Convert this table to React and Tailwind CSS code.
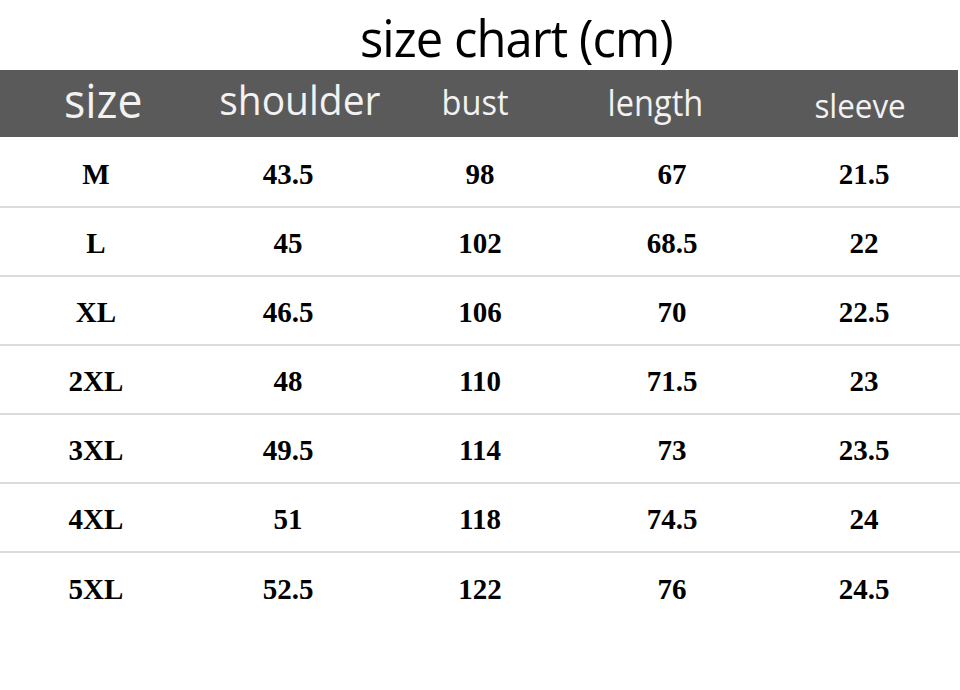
import React from 'react';

// --- Size chart data ---
const rows = [
  ['M', '43.5', '98', '67', '21.5'],
  ['L', '45', '102', '68.5', '22'],
  ['XL', '46.5', '106', '70', '22.5'],
  ['2XL', '48', '110', '71.5', '23'],
  ['3XL', '49.5', '114', '73', '23.5'],
  ['4XL', '51', '118', '74.5', '24'],
  ['5XL', '52.5', '122', '76', '24.5'],
];

const sans = { fontFamily: '"Open Sans", "Noto Sans", sans-serif' };

function App() {
  return (
    <div className="w-[960px] h-[690px] bg-white overflow-hidden" >
      {/* title */}
      <div className="h-[70px] flex items-end justify-center pb-[2px] pl-[72px]" style={sans}>
        <span className="inline-block text-[52px] leading-[62px] text-black tracking-[-1px] scale-x-[0.94]">size chart (cm)</span>
      </div>

      {/* header bar */}
      <div className="h-[67px] w-[958px] bg-[#5a5a5a] grid grid-cols-5 items-center text-[#f2f2f2]" style={sans}>
        <div className="flex justify-center pl-[14px]"><span className="inline-block text-[48px] leading-none -mt-[8px] scale-x-[0.93]">size</span></div>
        <div className="flex justify-center pl-[24px]"><span className="inline-block text-[41px] leading-none -mt-[8px] scale-x-[0.95]">shoulder</span></div>
        <div className="flex justify-center pr-[8px]"><span className="inline-block text-[35px] leading-none -mt-[4px] scale-x-[0.93]">bust</span></div>
        <div className="flex justify-center pr-[30px]"><span className="inline-block text-[37px] leading-none -mt-[4px] scale-x-[0.88]">length</span></div>
        <div className="flex justify-center pr-[4px]"><span className="inline-block text-[33px] leading-none mt-[4px] scale-x-[0.95]">sleeve</span></div>
      </div>

      {/* rows */}
      <div className="mt-[2px]" style={{ fontFamily: '"Liberation Serif", "Times New Roman", serif' }}>
        {rows.map((r, i) => (
          <div key={r[0]} className={`h-[69px] pt-[4px] grid grid-cols-5 items-center text-[29px] font-bold text-black ${i < rows.length - 1 ? 'border-b-2 border-[#dcdcdc]' : ''}`}>
            {r.map((c, j) => (
              <div key={j} className="text-center">{c}</div>
            ))}
          </div>
        ))}
      </div>
    </div>
  );
}

export default App;
